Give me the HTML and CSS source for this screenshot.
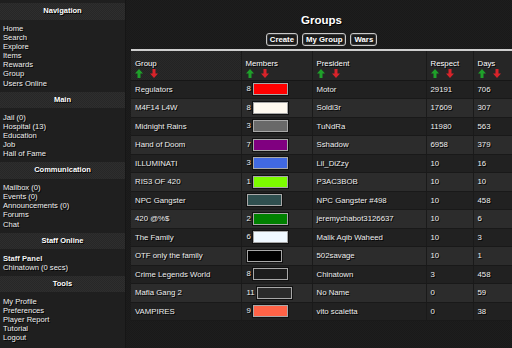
FILE: index.html
```html
<!DOCTYPE html>
<html lang="en">
<head>
  <meta charset="UTF-8">
  <title>Groups</title>
  <link rel="stylesheet" href="styles.css">
</head>
<body>
  <div class="layout">
    <div class="sidebar">
      <div class="side-head">Navigation</div>
      <ul class="side-list">
        <li><a href="#">Home</a></li>
        <li><a href="#">Search</a></li>
        <li><a href="#">Explore</a></li>
        <li><a href="#">Items</a></li>
        <li><a href="#">Rewards</a></li>
        <li><a href="#">Group</a></li>
        <li><a href="#">Users Online</a></li>
      </ul>
      <div class="side-head">Main</div>
      <ul class="side-list">
        <li><a href="#">Jail (0)</a></li>
        <li><a href="#">Hospital (13)</a></li>
        <li><a href="#">Education</a></li>
        <li><a href="#">Job</a></li>
        <li><a href="#">Hall of Fame</a></li>
      </ul>
      <div class="side-head">Communication</div>
      <ul class="side-list">
        <li><a href="#">Mailbox (0)</a></li>
        <li><a href="#">Events (0)</a></li>
        <li><a href="#">Announcements (0)</a></li>
        <li><a href="#">Forums</a></li>
        <li><a href="#">Chat</a></li>
      </ul>
      <div class="side-head">Staff Online</div>
      <ul class="side-list">
        <li class="bold"><a href="#">Staff Panel</a></li>
        <li><a href="#">Chinatown (0 secs)</a></li>
      </ul>
      <div class="side-head">Tools</div>
      <ul class="side-list">
        <li><a href="#">My Profile</a></li>
        <li><a href="#">Preferences</a></li>
        <li><a href="#">Player Report</a></li>
        <li><a href="#">Tutorial</a></li>
        <li><a href="#">Logout</a></li>
      </ul>
    </div>

    <div class="main">
      <h1>Groups</h1>
      <div class="actions">
        <button>Create</button>
        <button>My Group</button>
        <button>Wars</button>
      </div>

      <table class="groups">
        <colgroup>
          <col style="width: 110px">
          <col style="width: 71px">
          <col style="width: 114px">
          <col style="width: 47px">
          <col>
        </colgroup>
        <thead>
          <tr>
            <th>Group<span class="sort"><svg class="up" viewBox="0 0 8 9"><polygon points="4,0 8,4.5 5.5,4.5 5.5,9 2.5,9 2.5,4.5 0,4.5"/></svg><svg class="down" viewBox="0 0 8 9"><polygon points="2.5,0 5.5,0 5.5,4.5 8,4.5 4,9 0,4.5 2.5,4.5"/></svg></span></th>
            <th>Members<span class="sort"><svg class="up" viewBox="0 0 8 9"><polygon points="4,0 8,4.5 5.5,4.5 5.5,9 2.5,9 2.5,4.5 0,4.5"/></svg><svg class="down" viewBox="0 0 8 9"><polygon points="2.5,0 5.5,0 5.5,4.5 8,4.5 4,9 0,4.5 2.5,4.5"/></svg></span></th>
            <th>President<span class="sort"><svg class="up" viewBox="0 0 8 9"><polygon points="4,0 8,4.5 5.5,4.5 5.5,9 2.5,9 2.5,4.5 0,4.5"/></svg><svg class="down" viewBox="0 0 8 9"><polygon points="2.5,0 5.5,0 5.5,4.5 8,4.5 4,9 0,4.5 2.5,4.5"/></svg></span></th>
            <th>Respect<span class="sort"><svg class="up" viewBox="0 0 8 9"><polygon points="4,0 8,4.5 5.5,4.5 5.5,9 2.5,9 2.5,4.5 0,4.5"/></svg><svg class="down" viewBox="0 0 8 9"><polygon points="2.5,0 5.5,0 5.5,4.5 8,4.5 4,9 0,4.5 2.5,4.5"/></svg></span></th>
            <th>Days<span class="sort"><svg class="up" viewBox="0 0 8 9"><polygon points="4,0 8,4.5 5.5,4.5 5.5,9 2.5,9 2.5,4.5 0,4.5"/></svg><svg class="down" viewBox="0 0 8 9"><polygon points="2.5,0 5.5,0 5.5,4.5 8,4.5 4,9 0,4.5 2.5,4.5"/></svg></span></th>
          </tr>
        </thead>
        <tbody>
          <tr><td>Regulators</td><td>8 <span class="swatch" style="background: #ff0000"></span></td><td>Motor</td><td>29191</td><td>706</td></tr>
          <tr><td>M4F14 L4W</td><td>8 <span class="swatch" style="background: #fffaf0"></span></td><td>Soldi3r</td><td>17609</td><td>307</td></tr>
          <tr><td>Midnight Rains</td><td>3 <span class="swatch" style="background: #696969"></span></td><td>TuNdRa</td><td>11980</td><td>563</td></tr>
          <tr><td>Hand of Doom</td><td>7 <span class="swatch" style="background: #800080"></span></td><td>Sshadow</td><td>6958</td><td>379</td></tr>
          <tr><td>ILLUMINATI</td><td>3 <span class="swatch" style="background: #4169e1"></span></td><td>Lil_DiZzy</td><td>10</td><td>16</td></tr>
          <tr><td>RIS3 OF 420</td><td>1 <span class="swatch" style="background: #7cfc00"></span></td><td>P3AC3BOB</td><td>10</td><td>10</td></tr>
          <tr><td>NPC Gangster</td><td><span class="swatch" style="background: #2f4f4f"></span></td><td>NPC Gangster #498</td><td>10</td><td>458</td></tr>
          <tr><td>420 @%$</td><td>2 <span class="swatch" style="background: #008000"></span></td><td>jeremychabot3126637</td><td>10</td><td>6</td></tr>
          <tr><td>The Family</td><td>6 <span class="swatch" style="background: #f0f8ff"></span></td><td>Malik Aqib Waheed</td><td>10</td><td>3</td></tr>
          <tr><td>OTF only the family</td><td><span class="swatch" style="background: #000000"></span></td><td>502savage</td><td>10</td><td>1</td></tr>
          <tr><td>Crime Legends World</td><td>8 <span class="swatch" style="background: #1c1c1c"></span></td><td>Chinatown</td><td>3</td><td>458</td></tr>
          <tr><td>Mafia Gang 2</td><td>11 <span class="swatch" style="background: #2b2b2b"></span></td><td>No Name</td><td>0</td><td>59</td></tr>
          <tr><td>VAMPIRES</td><td>9 <span class="swatch" style="background: #ff6347"></span></td><td>vito scaletta</td><td>0</td><td>38</td></tr>
        </tbody>
      </table>
    </div>
  </div>
</body>
</html>
```

FILE: styles.css
```css
body {
    margin: 0;
    padding: 0;
    font-family: "Liberation Sans", Arial, sans-serif;
    color: #f0f0f0;
    background-color: #1b1b1b;
    background-image: repeating-conic-gradient(#1d1d1d 0 25%, #191919 0 50%);
    background-size: 2px 2px;
    overflow: hidden;
    height: 348px;
}

a {
    color: #f0f0f0;
    text-decoration: none;
}

.layout {
    display: flex;
    height: 100%;
}

/* sidebar */
.sidebar {
    width: 125px;
    flex-shrink: 0;
    padding-top: 3px;
    background: #1f1f1f;
    border-right: 1px solid #161616;
}

.side-head {
    height: 16.5px;
    line-height: 16.5px;
    text-align: center;
    font-size: 7.5px;
    font-weight: bold;
    color: #fff;
    text-shadow: 1px 1px 0 #000;
    background-color: #2b2b2b;
    background-image: repeating-conic-gradient(#2e2e2e 0 25%, #272727 0 50%);
    background-size: 2px 2px;
}

.side-list {
    list-style: none;
    margin: 0;
    padding: 4.5px 0 4px 3px;
    font-size: 7.6px;
    line-height: 9.1px;
}

.side-list a {
    text-shadow: 1px 1px 0 #000;
}

.side-list .bold a {
    font-weight: bold;
}

/* main */
.main {
    flex: 1;
    padding-left: 5px;
    min-width: 0;
}

.main h1 {
    margin: 0;
    padding-top: 12px;
    height: 16px;
    line-height: 16px;
    text-align: center;
    font-size: 11.5px;
    color: #fff;
    text-shadow: 1px 1px 0 #000;
}

.actions {
    display: flex;
    justify-content: center;
    gap: 4px;
    margin-top: 5px;
    height: 13px;
}

.actions button {
    font-family: inherit;
    font-size: 7.8px;
    font-weight: bold;
    color: #fff;
    background: #1a1a1a;
    border: 1px solid #c8c8c8;
    border-radius: 3px;
    box-shadow: inset 0 0 0 1px #3a3a3a;
    padding: 0 3px;
    height: 13px;
    line-height: 11px;
}

.groups {
    margin-top: 3px;
    width: 381px;
    table-layout: fixed;
    border-collapse: collapse;
    border-top: 2px solid #cfcfcf;
    font-size: 7.8px;
}

.groups th {
    height: 30px;
    text-align: left;
    vertical-align: top;
    font-weight: normal;
    padding: 8px 4px 0 4px;
    box-sizing: border-box;
    color: #fff;
    text-shadow: 1px 1px 0 #000;
    line-height: 9px;
    background-color: #262626;
    background-image: repeating-conic-gradient(#292929 0 25%, #232323 0 50%);
    background-size: 2px 2px;
    border-left: 1px solid #1a1a1a;
    border-bottom: 1px solid #161616;
}

.sort {
    display: flex;
    gap: 7px;
    margin-top: 1px;
}

.sort svg {
    width: 8px;
    height: 9px;
}

.sort .up polygon {
    fill: #1fa02a;
}

.sort .down polygon {
    fill: #d8232a;
}

.groups td {
    height: 18.5px;
    padding: 0 4px;
    box-sizing: border-box;
    white-space: nowrap;
    overflow: hidden;
    color: #eee;
    text-shadow: 1px 1px 0 #000;
    border-left: 1px solid #1a1a1a;
    border-bottom: 1px solid #191919;
}

.groups td:nth-child(2) {
    padding-left: 5px;
}

.groups th:first-child,
.groups td:first-child {
    border-left: none;
}

.groups tbody tr:nth-child(odd) td {
    background: #212121;
}

.groups tbody tr:nth-child(even) td {
    background: #2c2c2c;
}

.swatch {
    display: inline-block;
    width: 33px;
    height: 10px;
    vertical-align: middle;
    border: 1px solid #a8a8a8;
    outline: 1px solid #111;
}
```
